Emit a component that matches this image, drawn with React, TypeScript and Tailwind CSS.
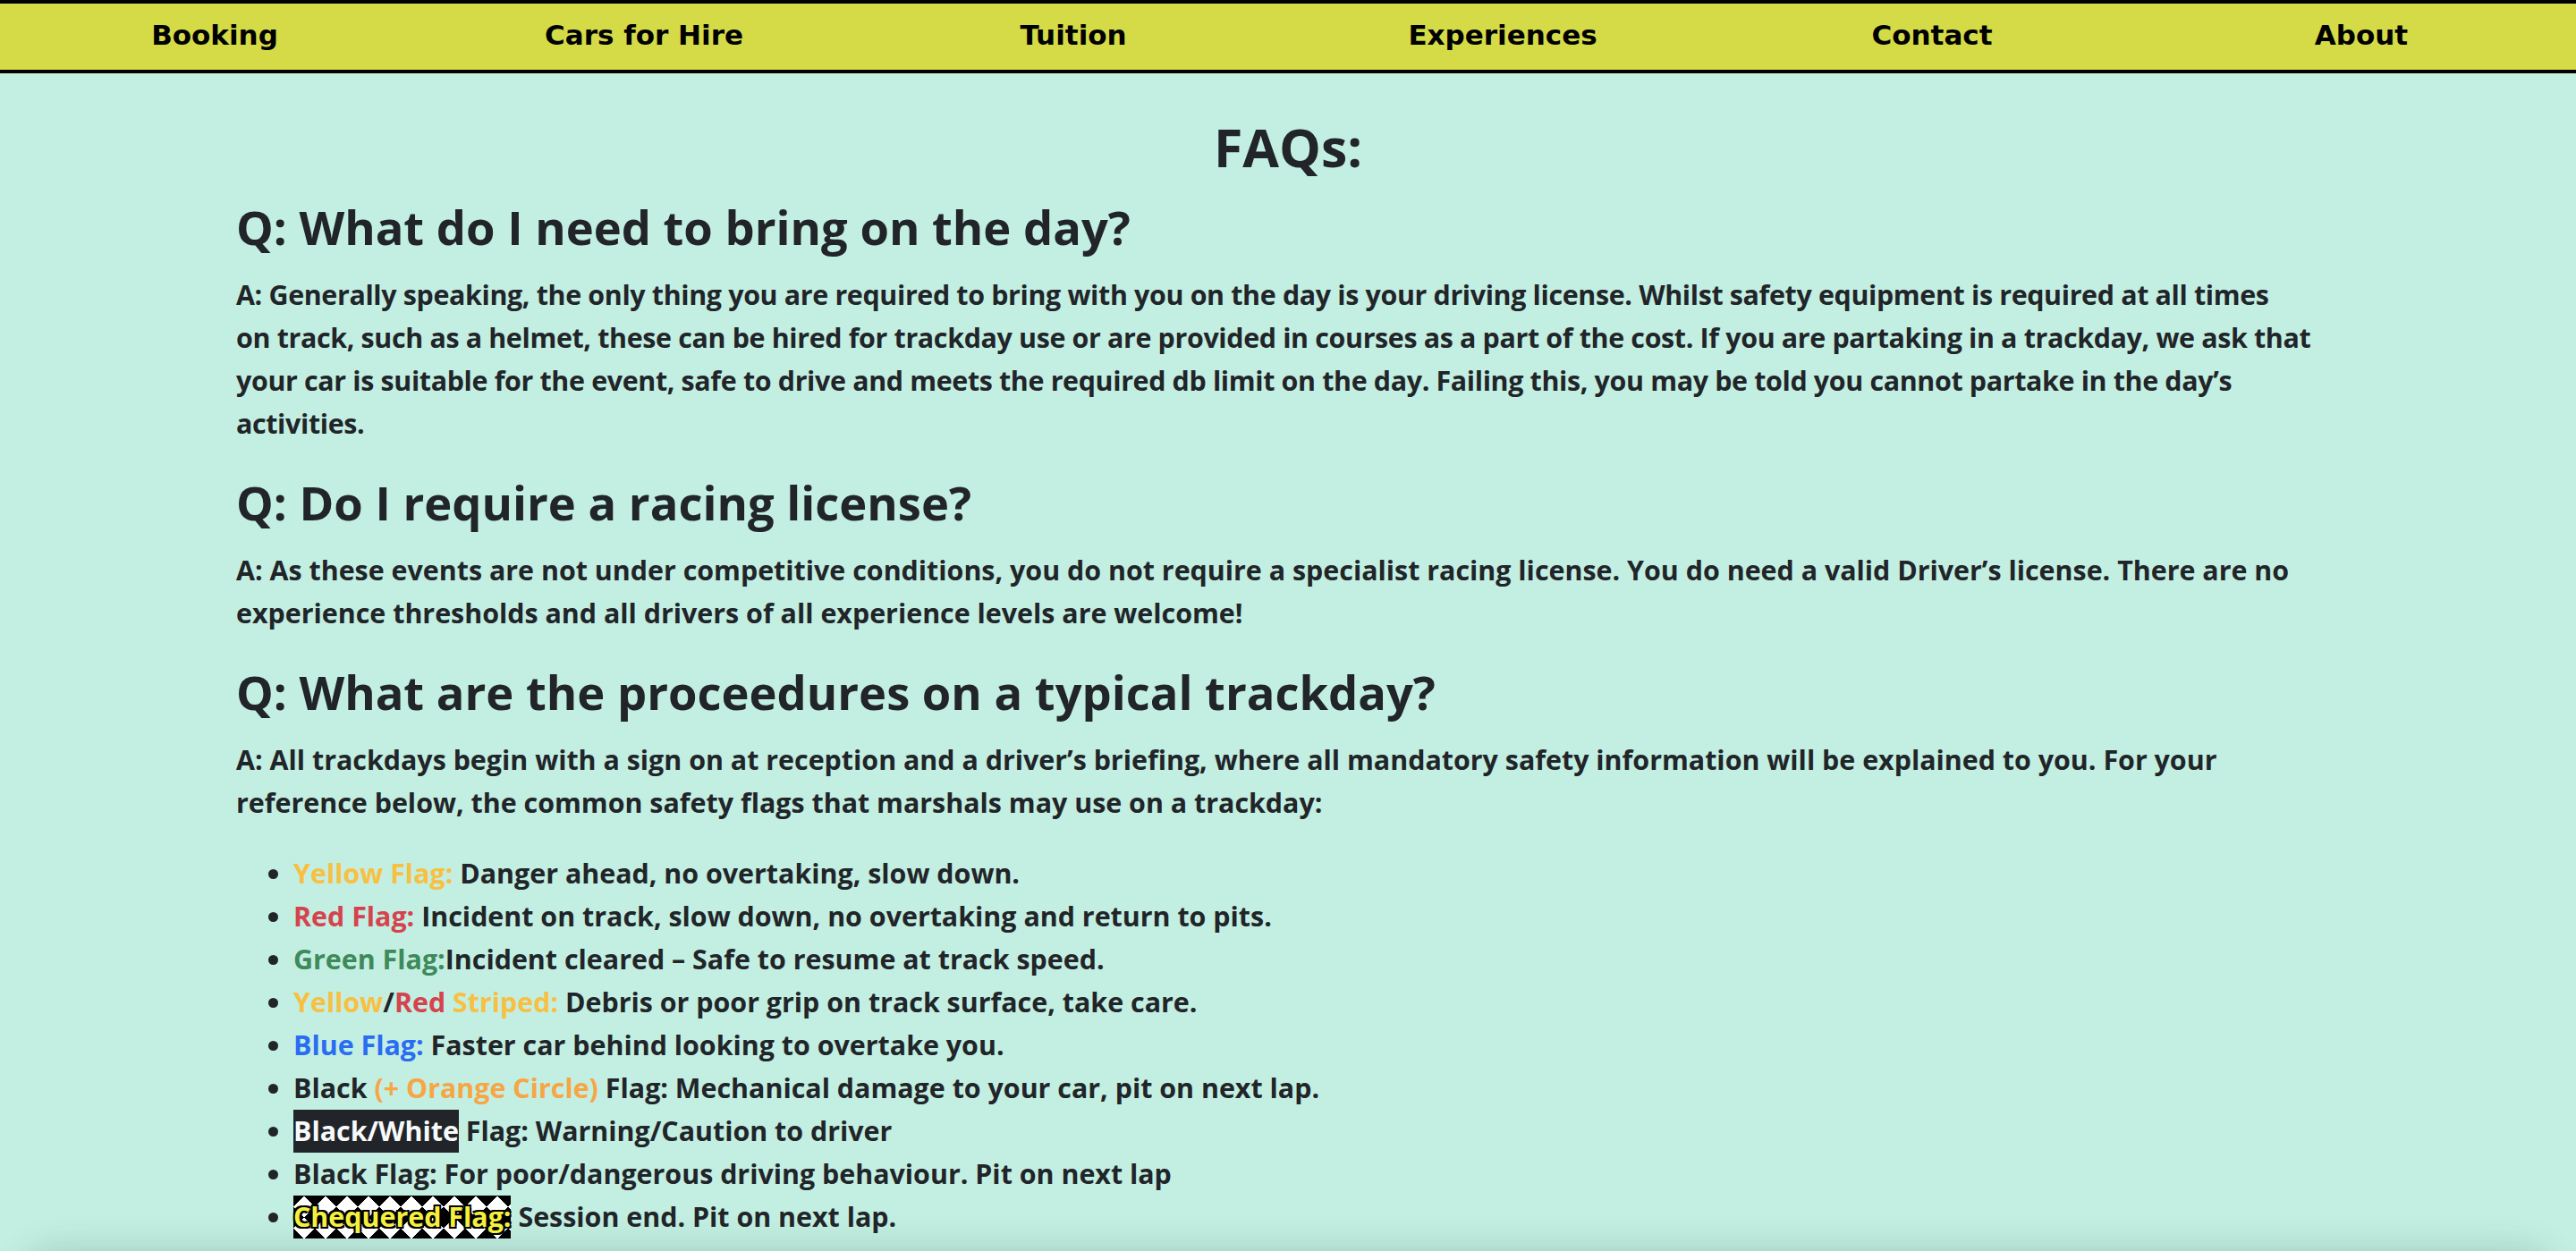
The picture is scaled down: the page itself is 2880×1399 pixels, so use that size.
import React from 'react';

const navItems = ['Booking', 'Cars for Hire', 'Tuition', 'Experiences', 'Contact', 'About'];

const Nav = () => (
  <nav className="flex h-[82px] border-y-4 border-black bg-[#d4db47]">
    {navItems.map((item) => (
      <a
        key={item}
        href="#"
        className="flex flex-1 items-center justify-center pb-[4px] font-['DejaVu_Sans',sans-serif] text-[31px] font-bold text-black"
      >
        {item}
      </a>
    ))}
  </nav>
);

const Question = ({ children }: { children: React.ReactNode }) => (
  <h3 className="mb-[20px] text-[52.5px] font-bold leading-[65px]">{children}</h3>
);

const Answer = ({ children, className = '' }: { children: React.ReactNode; className?: string }) => (
  <p className={`mb-[31px] text-[30.4px] font-bold leading-[48px] ${className}`}>{children}</p>
);

export default function App() {
  return (
    <div className="min-h-screen overflow-hidden bg-[#c3efe2] font-['Open_Sans',sans-serif] text-[#212529]">
      <Nav />

      <main className="mx-auto w-[2352px] pt-[47px]">
        <h2 className="mb-[22px] text-center text-[59px] font-bold leading-[70px]">FAQs:</h2>

        <Question>Q: What do I need to bring on the day?</Question>
        <Answer className="tracking-[-0.35px]">
          A: Generally speaking, the only thing you are required to bring with you on the day is your driving
          license. Whilst safety equipment is required at all times
          <br />
          on track, such as a helmet, these can be hired for trackday use or are provided in courses as a part of the
          cost. If you are partaking in a trackday, we ask that your car is suitable for the event, safe to drive and
          meets the required db limit on the day. Failing this, you may be told you cannot partake in the day’s
          activities.
        </Answer>

        <Question>Q: Do I require a racing license?</Question>
        <Answer>
          A: As these events are not under competitive conditions, you do not require a specialist racing license.
          You do need a valid Driver’s license. There are no experience thresholds and all drivers of all experience
          levels are welcome!
        </Answer>

        <Question>Q: What are the proceedures on a typical trackday?</Question>
        <Answer>
          A: All trackdays begin with a sign on at reception and a driver’s briefing, where all mandatory safety
          information will be explained to you. For your reference below, the common safety flags that marshals may
          use on a trackday:
        </Answer>

        <ul className="list-disc pl-[64px] text-[30.4px] font-bold leading-[48px] marker:text-[#212529]">
          <li>
            <span className="text-[#f8c043]">Yellow Flag:</span> Danger ahead, no overtaking, slow down.
          </li>
          <li>
            <span className="text-[#d5434e]">Red Flag:</span> Incident on track, slow down, no overtaking and return to
            pits.
          </li>
          <li>
            <span className="text-[#3e8a5b]">Green Flag:</span>Incident cleared – Safe to resume at track speed.
          </li>
          <li>
            <span className="text-[#f8c043]">Yellow</span>/<span className="text-[#d5434e]">Red</span>
            <span className="text-[#f8c043]"> Striped:</span> Debris or poor grip on track surface, take care.
          </li>
          <li>
            <span className="text-[#2a6cf2]">Blue Flag:</span> Faster car behind looking to overtake you.
          </li>
          <li>
            Black <span className="text-[#f7a646]">(+ Orange Circle)</span> Flag: Mechanical damage to your car, pit on
            next lap.
          </li>
          <li>
            <span className="inline-block bg-[#212529] text-[#f8f9fa]">Black/White</span> Flag: Warning/Caution to driver
          </li>
          <li>Black Flag: For poor/dangerous driving behaviour. Pit on next lap</li>
          <li>
            <span className="inline-block bg-white bg-[linear-gradient(45deg,#000_25%,transparent_25%,transparent_75%,#000_75%),linear-gradient(-45deg,#000_25%,transparent_25%,transparent_75%,#000_75%)] bg-[length:24px_24px] text-[#f5f03f] [text-shadow:-2px_-2px_0_#000,2px_-2px_0_#000,-2px_2px_0_#000,2px_2px_0_#000]">
              Chequered Flag:
            </span>{' '}
            Session end. Pit on next lap.
          </li>
        </ul>

        <footer className="mx-[-240px] mt-[24px] h-[200px] rounded-[40px] bg-[#c3efe2] shadow-[0_-10px_40px_rgba(0,60,40,0.2)]" />
      </main>
    </div>
  );
}
